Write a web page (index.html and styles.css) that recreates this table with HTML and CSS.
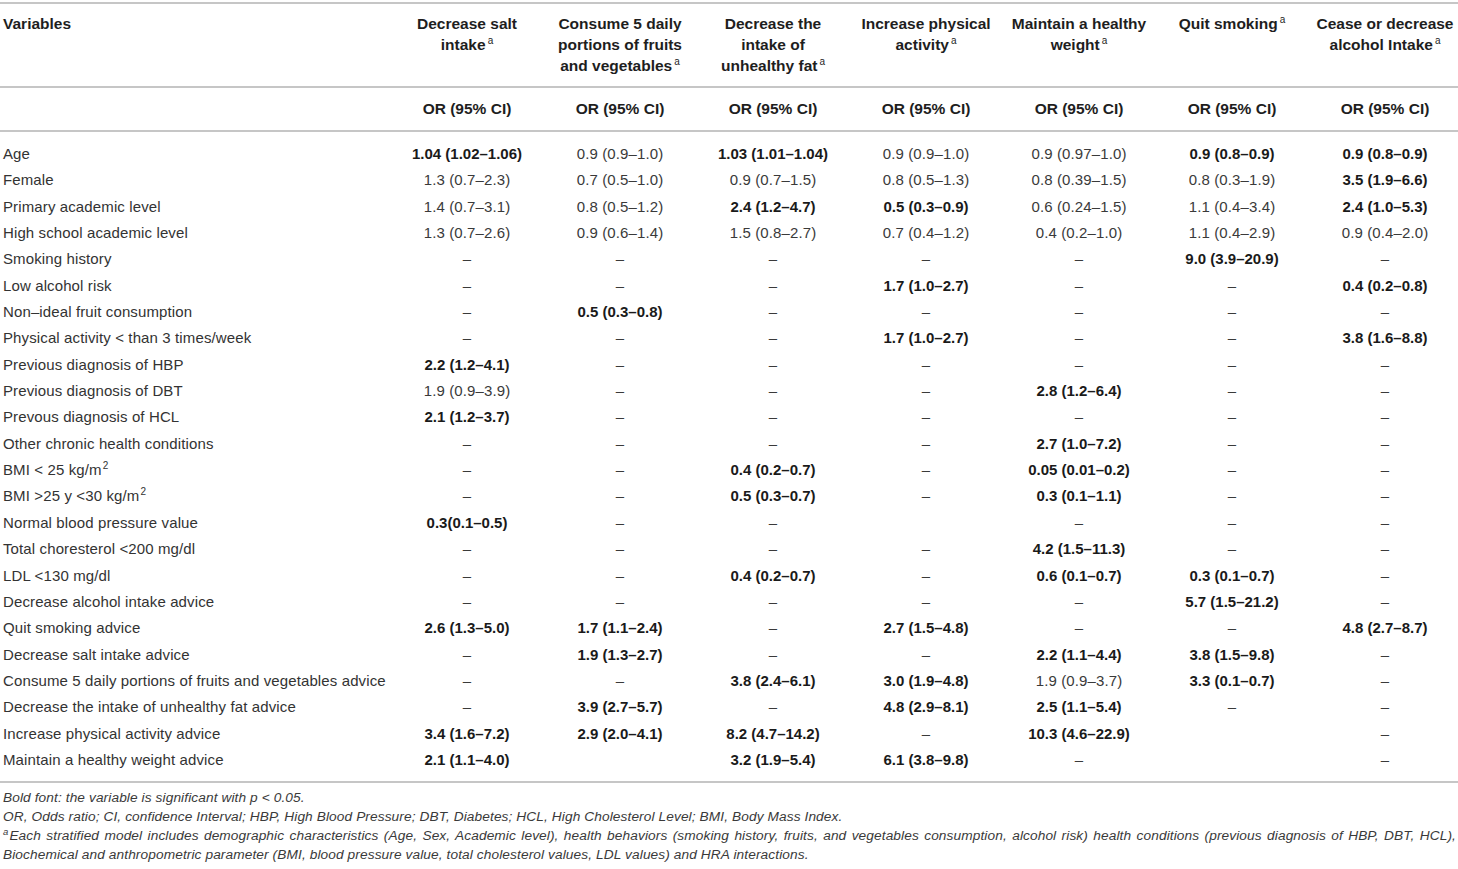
FILE: index.html
```html
<!DOCTYPE html>
<html lang="en">
<head>
<meta charset="utf-8">
<title>Table</title>
<link rel="stylesheet" href="styles.css">
</head>
<body>
<div class="page">
<table class="or-table">
  <colgroup>
    <col class="c-var">
    <col class="c-val"><col class="c-val"><col class="c-val"><col class="c-val"><col class="c-val"><col class="c-val"><col class="c-val">
  </colgroup>
  <thead>
    <tr class="h1">
      <th class="var">Variables</th>
      <th>Decrease salt intake<span class="sup">a</span></th>
      <th>Consume 5 daily portions of fruits and vegetables<span class="sup">a</span></th>
      <th>Decrease the intake of unhealthy fat<span class="sup">a</span></th>
      <th>Increase physical activity<span class="sup">a</span></th>
      <th>Maintain a healthy weight<span class="sup">a</span></th>
      <th>Quit smoking<span class="sup">a</span></th>
      <th>Cease or decrease alcohol Intake<span class="sup">a</span></th>
    </tr>
    <tr class="h2">
      <th class="var"></th>
      <th>OR (95% CI)</th><th>OR (95% CI)</th><th>OR (95% CI)</th><th>OR (95% CI)</th><th>OR (95% CI)</th><th>OR (95% CI)</th><th>OR (95% CI)</th>
    </tr>
  </thead>
  <tbody>
    <tr><td>Age</td><td class="b">1.04 (1.02–1.06)</td><td>0.9 (0.9–1.0)</td><td class="b">1.03 (1.01–1.04)</td><td>0.9 (0.9–1.0)</td><td>0.9 (0.97–1.0)</td><td class="b">0.9 (0.8–0.9)</td><td class="b">0.9 (0.8–0.9)</td></tr>
    <tr><td>Female</td><td>1.3 (0.7–2.3)</td><td>0.7 (0.5–1.0)</td><td>0.9 (0.7–1.5)</td><td>0.8 (0.5–1.3)</td><td>0.8 (0.39–1.5)</td><td>0.8 (0.3–1.9)</td><td class="b">3.5 (1.9–6.6)</td></tr>
    <tr><td>Primary academic level</td><td>1.4 (0.7–3.1)</td><td>0.8 (0.5–1.2)</td><td class="b">2.4 (1.2–4.7)</td><td class="b">0.5 (0.3–0.9)</td><td>0.6 (0.24–1.5)</td><td>1.1 (0.4–3.4)</td><td class="b">2.4 (1.0–5.3)</td></tr>
    <tr><td>High school academic level</td><td>1.3 (0.7–2.6)</td><td>0.9 (0.6–1.4)</td><td>1.5 (0.8–2.7)</td><td>0.7 (0.4–1.2)</td><td>0.4 (0.2–1.0)</td><td>1.1 (0.4–2.9)</td><td>0.9 (0.4–2.0)</td></tr>
    <tr><td>Smoking history</td><td>–</td><td>–</td><td>–</td><td>–</td><td>–</td><td class="b">9.0 (3.9–20.9)</td><td>–</td></tr>
    <tr><td>Low alcohol risk</td><td>–</td><td>–</td><td>–</td><td class="b">1.7 (1.0–2.7)</td><td>–</td><td>–</td><td class="b">0.4 (0.2–0.8)</td></tr>
    <tr><td>Non–ideal fruit consumption</td><td>–</td><td class="b">0.5 (0.3–0.8)</td><td>–</td><td>–</td><td>–</td><td>–</td><td>–</td></tr>
    <tr><td>Physical activity &lt; than 3 times/week</td><td>–</td><td>–</td><td>–</td><td class="b">1.7 (1.0–2.7)</td><td>–</td><td>–</td><td class="b">3.8 (1.6–8.8)</td></tr>
    <tr><td>Previous diagnosis of HBP</td><td class="b">2.2 (1.2–4.1)</td><td>–</td><td>–</td><td>–</td><td>–</td><td>–</td><td>–</td></tr>
    <tr><td>Previous diagnosis of DBT</td><td>1.9 (0.9–3.9)</td><td>–</td><td>–</td><td>–</td><td class="b">2.8 (1.2–6.4)</td><td>–</td><td>–</td></tr>
    <tr><td>Prevous diagnosis of HCL</td><td class="b">2.1 (1.2–3.7)</td><td>–</td><td>–</td><td>–</td><td>–</td><td>–</td><td>–</td></tr>
    <tr><td>Other chronic health conditions</td><td>–</td><td>–</td><td>–</td><td>–</td><td class="b">2.7 (1.0–7.2)</td><td>–</td><td>–</td></tr>
    <tr><td>BMI &lt; 25 kg/m<span class="pw">2</span></td><td>–</td><td>–</td><td class="b">0.4 (0.2–0.7)</td><td>–</td><td class="b">0.05 (0.01–0.2)</td><td>–</td><td>–</td></tr>
    <tr><td>BMI &gt;25 y &lt;30 kg/m<span class="pw">2</span></td><td>–</td><td>–</td><td class="b">0.5 (0.3–0.7)</td><td>–</td><td class="b">0.3 (0.1–1.1)</td><td>–</td><td>–</td></tr>
    <tr><td>Normal blood pressure value</td><td class="b">0.3(0.1–0.5)</td><td>–</td><td>–</td><td></td><td>–</td><td>–</td><td>–</td></tr>
    <tr><td>Total choresterol &lt;200 mg/dl</td><td>–</td><td>–</td><td>–</td><td>–</td><td class="b">4.2 (1.5–11.3)</td><td>–</td><td>–</td></tr>
    <tr><td>LDL &lt;130 mg/dl</td><td>–</td><td>–</td><td class="b">0.4 (0.2–0.7)</td><td>–</td><td class="b">0.6 (0.1–0.7)</td><td class="b">0.3 (0.1–0.7)</td><td>–</td></tr>
    <tr><td>Decrease alcohol intake advice</td><td>–</td><td>–</td><td>–</td><td>–</td><td>–</td><td class="b">5.7 (1.5–21.2)</td><td>–</td></tr>
    <tr><td>Quit smoking advice</td><td class="b">2.6 (1.3–5.0)</td><td class="b">1.7 (1.1–2.4)</td><td>–</td><td class="b">2.7 (1.5–4.8)</td><td>–</td><td>–</td><td class="b">4.8 (2.7–8.7)</td></tr>
    <tr><td>Decrease salt intake advice</td><td>–</td><td class="b">1.9 (1.3–2.7)</td><td>–</td><td>–</td><td class="b">2.2 (1.1–4.4)</td><td class="b">3.8 (1.5–9.8)</td><td>–</td></tr>
    <tr><td>Consume 5 daily portions of fruits and vegetables advice</td><td>–</td><td>–</td><td class="b">3.8 (2.4–6.1)</td><td class="b">3.0 (1.9–4.8)</td><td>1.9 (0.9–3.7)</td><td class="b">3.3 (0.1–0.7)</td><td>–</td></tr>
    <tr><td>Decrease the intake of unhealthy fat advice</td><td>–</td><td class="b">3.9 (2.7–5.7)</td><td>–</td><td class="b">4.8 (2.9–8.1)</td><td class="b">2.5 (1.1–5.4)</td><td>–</td><td>–</td></tr>
    <tr><td>Increase physical activity advice</td><td class="b">3.4 (1.6–7.2)</td><td class="b">2.9 (2.0–4.1)</td><td class="b">8.2 (4.7–14.2)</td><td>–</td><td class="b">10.3 (4.6–22.9)</td><td></td><td>–</td></tr>
    <tr><td>Maintain a healthy weight advice</td><td class="b">2.1 (1.1–4.0)</td><td></td><td class="b">3.2 (1.9–5.4)</td><td class="b">6.1 (3.8–9.8)</td><td>–</td><td></td><td>–</td></tr>
  </tbody>
</table>
<div class="notes">
  <p>Bold font: the variable is significant with p &lt; 0.05.</p>
  <p>OR, Odds ratio; CI, confidence Interval; HBP, High Blood Pressure; DBT, Diabetes; HCL, High Cholesterol Level; BMI, Body Mass Index.</p>
  <p class="just"><span class="nsup">a</span>Each stratified model includes demographic characteristics (Age, Sex, Academic level), health behaviors (smoking history, fruits, and vegetables consumption, alcohol risk) health conditions (previous diagnosis of HBP, DBT, HCL), Biochemical and anthropometric parameter (BMI, blood pressure value, total cholesterol values, LDL values) and HRA interactions.</p>
</div>
</div>
</body>
</html>
```

FILE: styles.css
```css
html, body {
  margin: 0;
  padding: 0;
  background: #ffffff;
}

body {
  font-family: "Liberation Sans", Arial, sans-serif;
  color: #333333;
}

.page {
  width: 1458px;
  padding-top: 2px;
}

.or-table {
  width: 1458px;
  table-layout: fixed;
  border-collapse: collapse;
  border-top: 2px solid #c6c6c6;
  border-bottom: 2px solid #c6c6c6;
}

.c-var { width: 387px; }
.c-val { width: 153px; }

.or-table th {
  font-size: 15.5px;
  font-weight: bold;
  color: #1e1e1e;
  line-height: 21px;
  text-align: center;
  vertical-align: top;
  padding: 0 3px 0 10px;
}

.or-table th.var {
  text-align: left;
  padding-left: 3px;
}

.or-table tr.h1 th {
  padding-top: 9px;
  padding-bottom: 10px;
  height: 63px;
  border-bottom: 2px solid #c6c6c6;
}

.or-table tr.h2 th {
  height: 41px;
  vertical-align: middle;
  padding-top: 0;
  padding-bottom: 1px;
  border-bottom: 2px solid #c6c6c6;
}

.sup {
  font-size: 10px;
  font-weight: normal;
  line-height: 10px;
  vertical-align: 6px;
  margin-left: 2px;
}

.pw {
  font-size: 10px;
  line-height: 10px;
  vertical-align: 6px;
  margin-left: 1px;
}

.or-table td {
  font-size: 15px;
  letter-spacing: 0.12px;
  line-height: 20.35px;
  padding: 3px 0 3px 7px;
  text-align: center;
  color: #3a3a3a;
  white-space: nowrap;
}

.or-table td:first-child {
  text-align: left;
  padding-left: 3px;
  color: #333333;
}

.or-table td.b {
  font-weight: bold;
  letter-spacing: 0;
  color: #1a1a1a;
}

.or-table tbody tr:first-child td {
  padding-top: 12px;
}

.or-table tbody tr:last-child td {
  padding-bottom: 11px;
}

.notes {
  padding: 5px 2px 0 3px;
}

.notes p {
  margin: 0;
  font-size: 13.7px;
  letter-spacing: 0.1px;
  line-height: 19px;
  font-style: italic;
  color: #3a3a3a;
}

.notes p.just {
  text-align: justify;
}

.nsup {
  font-size: 9.5px;
  line-height: 9.5px;
  vertical-align: 5px;
  margin-right: 1px;
}
```
